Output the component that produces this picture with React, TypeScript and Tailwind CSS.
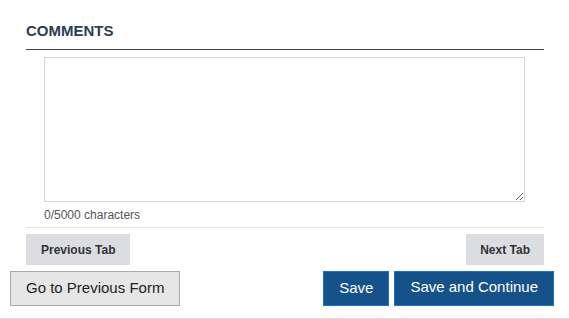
export default function App() {
  return (
    <div className="w-[569px] h-[319px] bg-white border-b border-[#dddddd] font-['Liberation_Sans',Arial,sans-serif]">
      <div className="ml-[26px] w-[518px]">
        {/* Section heading */}
        <h2 className="pt-[19px] pb-[6px] text-[15px] leading-6 font-bold text-[#2c3e50] border-b border-[#37474f]">
          COMMENTS
        </h2>

        {/* Comment box */}
        <div className="ml-[18px] mt-[7px] pb-[4px]">
          <textarea className="block w-[481px] h-[145px] border border-[#d4d4d4] bg-white outline-none resize-y" />
          <div className="mt-[5px] text-[12px] leading-4 text-[#555555]">
            0/5000 characters
          </div>
        </div>

        {/* Tab navigation */}
        <div className="border-t border-[#e3e3e3] pt-[6px] flex justify-between">
          <button className="h-[31px] px-[15px] bg-[#dcdde1] text-[12px] font-bold text-[#333333]">
            Previous Tab
          </button>
          <button className="h-[31px] px-[14px] bg-[#dcdde1] text-[12px] font-bold text-[#333333]">
            Next Tab
          </button>
        </div>
      </div>

      {/* Form actions */}
      <div className="ml-[10px] w-[544px] mt-[6px] flex justify-between">
        <button className="h-[35px] px-[15px] border border-[#aaaaaa] bg-[#e6e6e6] text-[15px] text-[#222222]">
          Go to Previous Form
        </button>
        <div className="flex gap-[5px]">
          <button className="h-[35px] px-[15px] border border-[#1a73c7] bg-[#15528a] text-[15px] text-white">
            Save
          </button>
          <button className="h-[35px] px-[15px] pb-[3px] border border-[#1a73c7] bg-[#15528a] text-[15px] text-white">
            Save and Continue
          </button>
        </div>
      </div>
    </div>
  );
}
